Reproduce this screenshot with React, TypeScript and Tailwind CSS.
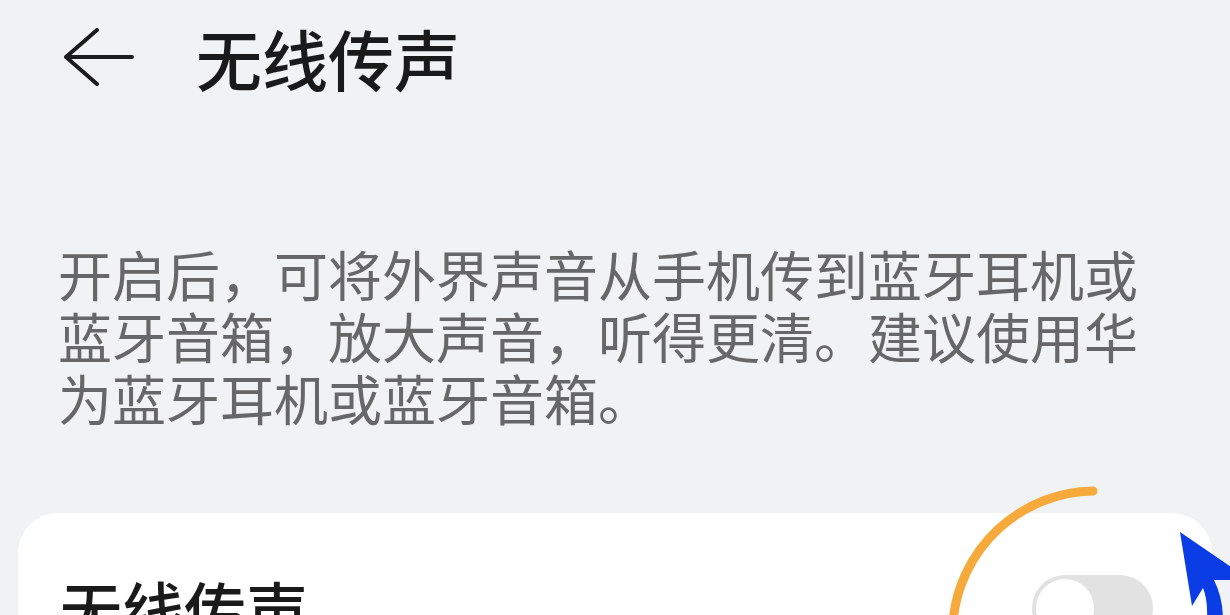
import React from "react";

const font = { fontFamily: '"Noto Sans CJK SC", "Noto Sans", sans-serif' };

function BackArrow() {
  return (
    <svg width="70" height="58" viewBox="0 0 70 58" fill="none" className="shrink-0">
      <path d="M2 29 H68 M33 2 L2 29 L33 56" stroke="#1c1c1c" strokeWidth="4" strokeLinecap="round" strokeLinejoin="round" />
    </svg>
  );
}

function Toggle() {
  return (
    <div className="w-[121px] h-[66px] rounded-full bg-[#e2e2e2] p-[4px] flex items-center shrink-0">
      <div className="w-[58px] h-[58px] rounded-full bg-white" />
    </div>
  );
}

export default function App() {
  return (
    <div className="relative w-[1230px] h-[615px] overflow-hidden bg-[#f0f2f4]" style={font}>
      {/* header */}
      <div className="flex items-center pl-[64px] pt-[24px]">
        <BackArrow />
        <h1 className="ml-[62px] text-[66px] leading-[66px] font-medium text-[#1a1a1a]">无线传声</h1>
      </div>

      {/* description */}
      <p className="mt-[153px] ml-[58px] w-[1100px] text-[54px] leading-[62px] text-[#676767]">
        开启后，可将外界声音从手机传到蓝牙耳机或蓝牙音箱，放大声音，听得更清。建议使用华为蓝牙耳机或蓝牙音箱。
      </p>

      {/* settings card */}
      <div className="mt-[84px] ml-[18px] w-[1194px] rounded-[40px] bg-white pl-[42px] pr-[59px] pt-[62px] pb-[40px] flex items-center justify-between">
        <span className="text-[62px] leading-[66px] font-medium text-[#1a1a1a]">无线传声</span>
        <Toggle />
      </div>

      {/* annotation strokes */}
      <svg className="absolute inset-0 pointer-events-none" width="1230" height="615" viewBox="0 0 1230 615">
        <path d="M1093 491 A143 143 0 0 0 953 622" stroke="#f7aa3c" strokeWidth="9" strokeLinecap="round" fill="none" />
        <path d="M1180 532 L1192 606 L1203 588 Q1208 600 1207 620 L1223 620 Q1223 598 1214 580 L1250 580 Z" fill="#0b3de6" />
      </svg>
    </div>
  );
}
